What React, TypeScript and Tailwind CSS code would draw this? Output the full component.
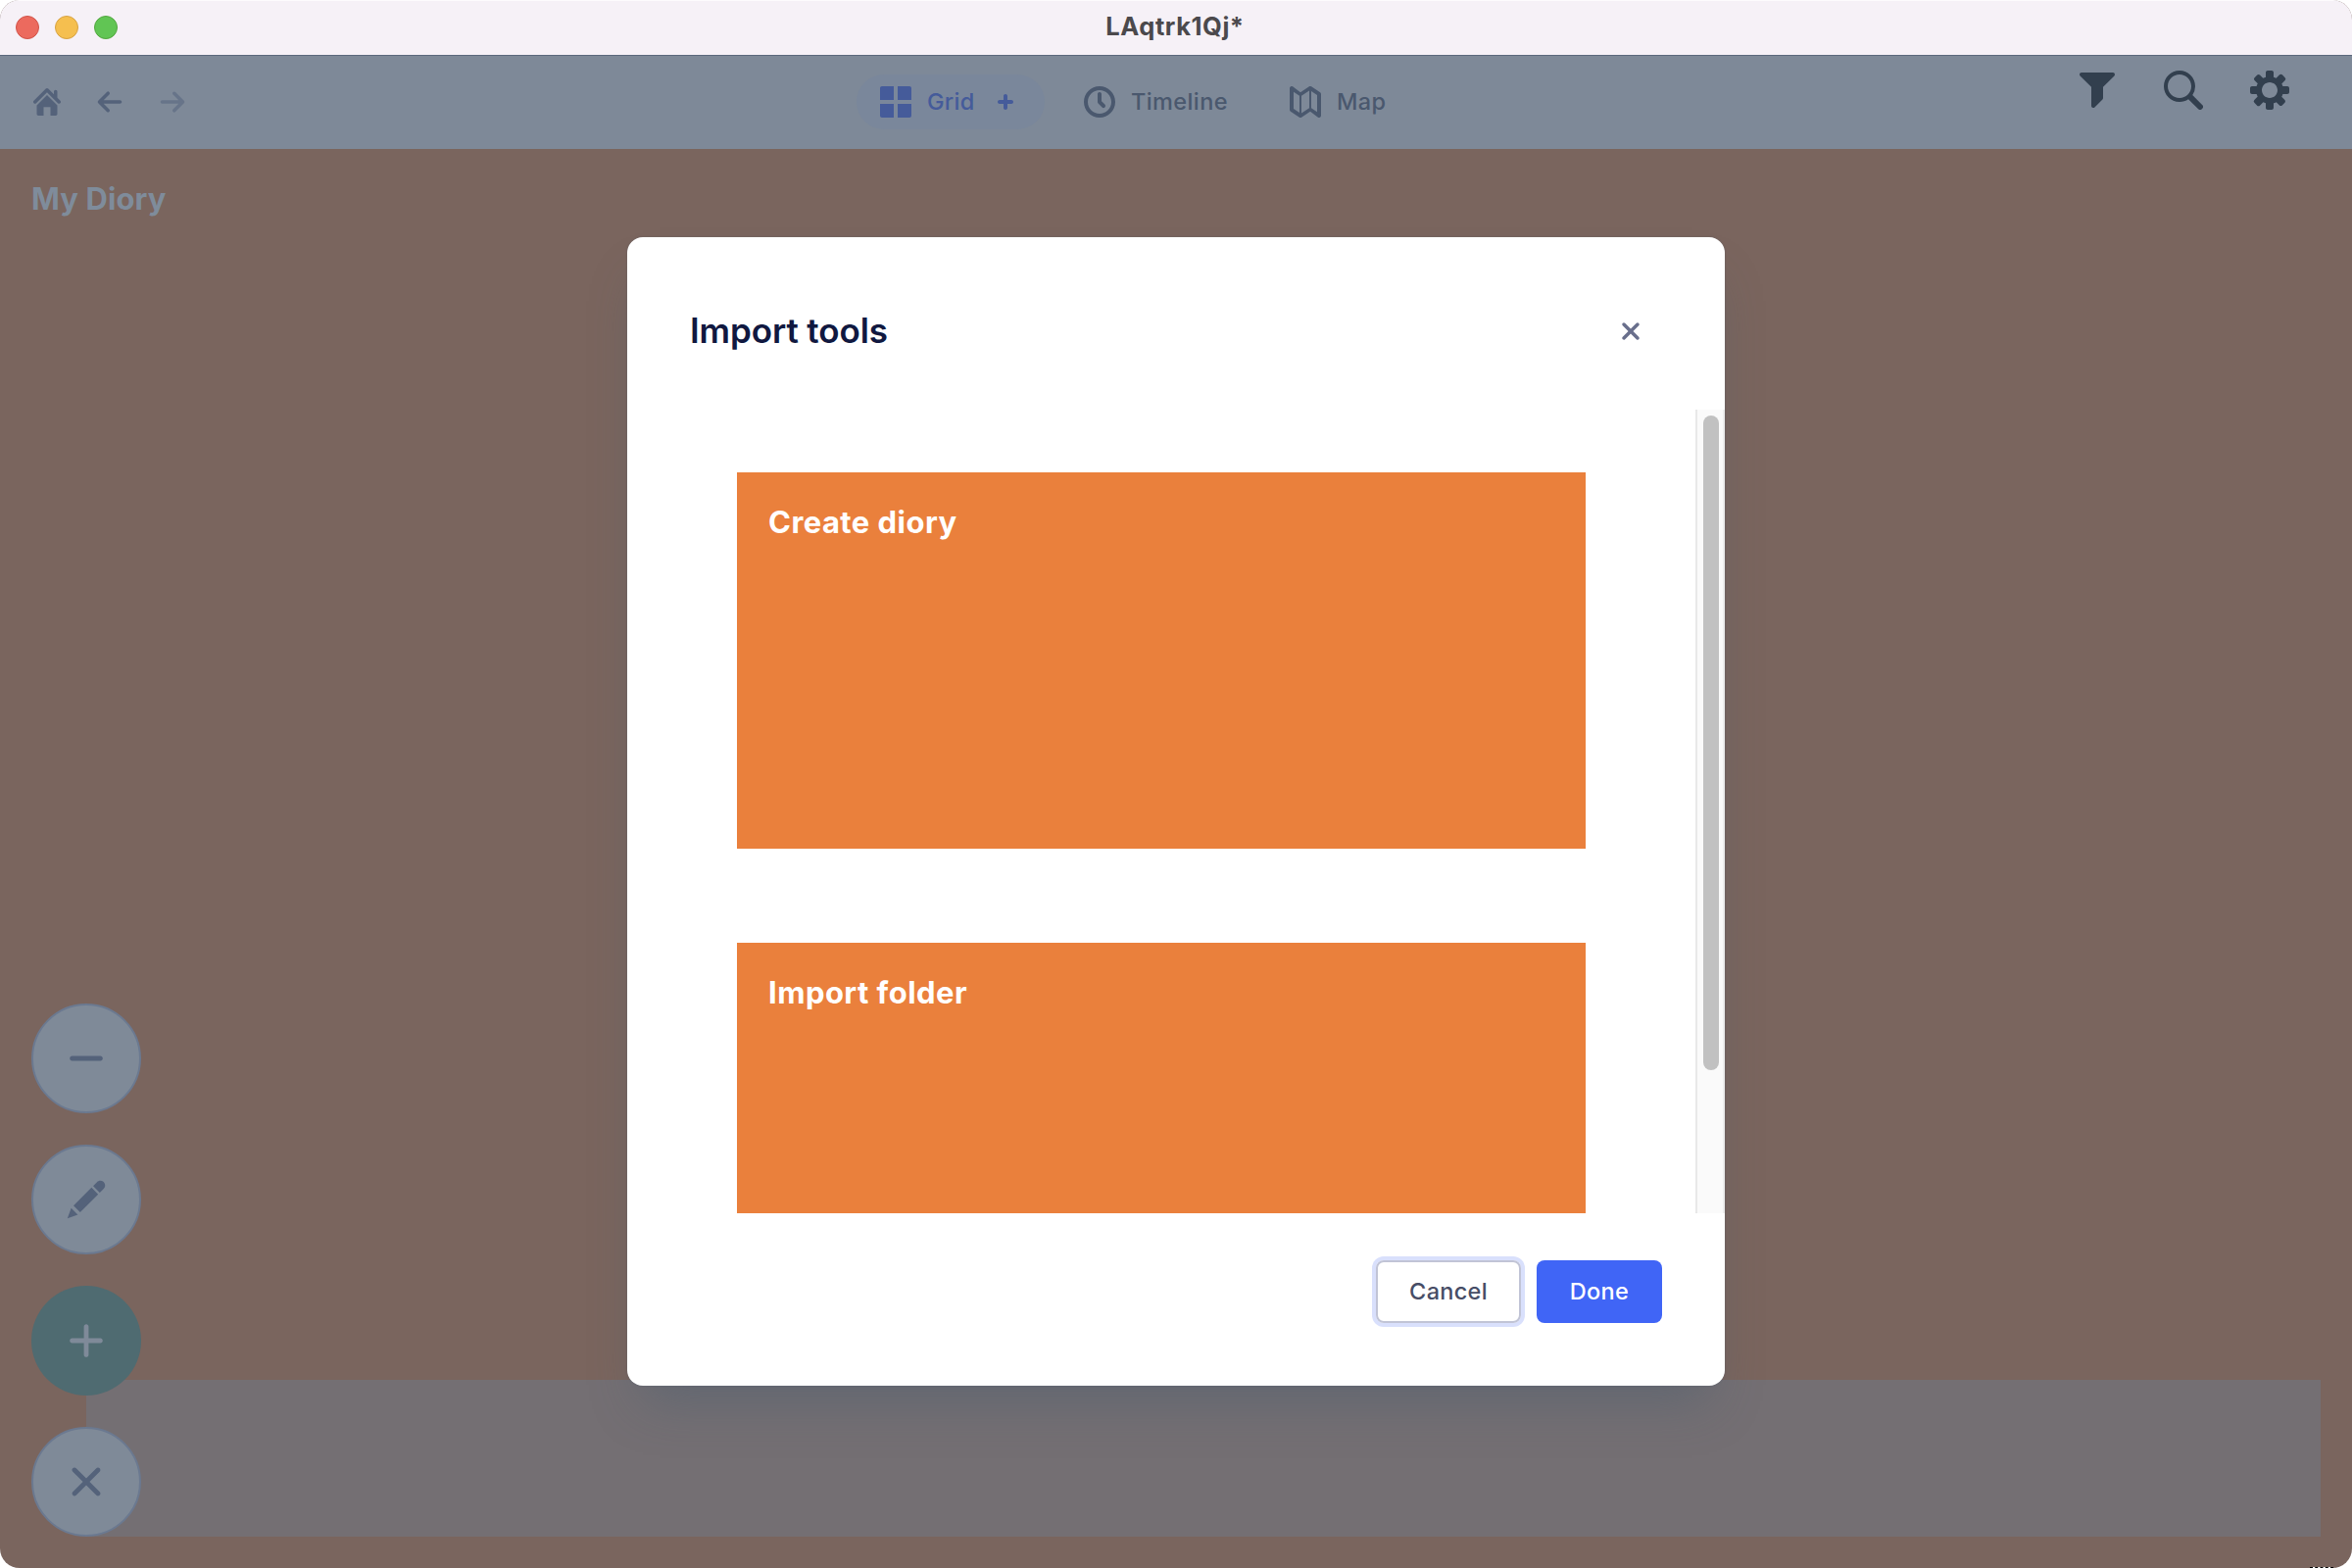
import type { ReactNode } from "react";

const ICONS = {
  home: "M2 10v5c0 .55.45 1 1 1h3v-5h4v5h3c.55 0 1-.45 1-1v-5L8 4l-6 6zm13.71-2.71L14 5.59V2c0-.55-.45-1-1-1s-1 .45-1 1v1.59L8.71.29C8.53.11 8.28 0 8 0s-.53.11-.71.29l-7 7a1.003 1.003 0 001.42 1.42L8 2.41l6.29 6.29c.18.19.43.3.71.3a1.003 1.003 0 00.71-1.71z",
  arrowLeft: "M13.99 6.99H4.41L7.7 3.7a1.003 1.003 0 00-1.42-1.42l-5 5a1.014 1.014 0 000 1.42l5 5a1.003 1.003 0 001.42-1.42L4.41 8.99H14c.55 0 1-.45 1-1s-.46-1-1.01-1z",
  grid: "M0 1v6h7V0H1C.45 0 0 .45 0 1zm0 14c0 .55.45 1 1 1h6V9H0v6zM15 0H9v7h7V1c0-.55-.45-1-1-1zM9 16h6c.55 0 1-.45 1-1V9H9v7z",
  smallPlus: "M11 7H9V5c0-.55-.45-1-1-1s-1 .45-1 1v2H5c-.55 0-1 .45-1 1s.45 1 1 1h2v2c0 .55.45 1 1 1s1-.45 1-1V9h2c.55 0 1-.45 1-1s-.45-1-1-1z",
  time: "M8 0C3.58 0 0 3.58 0 8s3.58 8 8 8 8-3.58 8-8-3.58-8-8-8zm0 14c-3.31 0-6-2.69-6-6s2.69-6 6-6 6 2.69 6 6-2.69 6-6 6zm1-6.41V4c0-.55-.45-1-1-1s-1 .45-1 1v4c0 .28.11.53.29.71l2 2a1.003 1.003 0 001.42-1.42L9 7.59z",
  map: "M15.55 3.17l-4.49-3A.998.998 0 0010.5 0c-.2 0-.39.06-.55.17L5.5 3.13 1.55.17A1 1 0 000 1v11c0 .35.18.65.45.83l4.5 3c.15.11.34.17.55.17s.4-.06.55-.17l4.45-2.96 3.95 2.96A1 1 0 0016 15V4c0-.35-.18-.65-.45-.83zM5 13.46l-3-2V2.87l3 2v8.59zm5-2.33l-4 2.66V4.87l4-2.67v8.93zm4 2L11 11.13V2.54l3 2v8.59z",
  cross16: "M9.41 8l3.29-3.29c.19-.18.3-.43.3-.71a1.003 1.003 0 00-1.71-.71L8 6.59l-3.29-3.3a1.003 1.003 0 00-1.42 1.42L6.59 8 3.3 11.29c-.19.18-.3.43-.3.71a1.003 1.003 0 001.71.71L8 9.41l3.29 3.29c.18.19.43.3.71.3a1.003 1.003 0 00.71-1.71L9.41 8z",
  filter: "M18 1H2c-.55 0-1 .45-1 1 0 .28.11.53.29.71L7 8.41V18a1.003 1.003 0 001.71.71l4-4c.18-.18.29-.43.29-.71V8.41l5.71-5.71c.18-.17.29-.42.29-.7 0-.55-.45-1-1-1z",
  search: "M19.56 17.44l-4.94-4.94A8.004 8.004 0 0016 8c0-4.42-3.58-8-8-8S0 3.58 0 8s3.58 8 8 8c1.67 0 3.21-.51 4.5-1.38l4.94 4.94a1.498 1.498 0 102.12-2.12zM8 14c-3.31 0-6-2.69-6-6s2.69-6 6-6 6 2.69 6 6-2.69 6-6 6z",
  cog: "M19 8h-2.31c-.14-.46-.33-.89-.56-1.3l1.7-1.7a.996.996 0 000-1.41l-1.41-1.41a.996.996 0 00-1.41 0l-1.7 1.7c-.41-.22-.84-.41-1.3-.55V1c0-.55-.45-1-1-1H9c-.55 0-1 .45-1 1v2.33c-.48.14-.94.34-1.37.58L5 2.28a.972.972 0 00-1.36 0L2.28 3.64c-.37.38-.37.99 0 1.36L3.9 6.62c-.24.44-.44.89-.59 1.38H1c-.55 0-1 .45-1 1v2c0 .55.45 1 1 1h2.31c.14.46.33.89.56 1.3L2.17 15a.996.996 0 000 1.41l1.41 1.41c.39.39 1.02.39 1.41 0l1.7-1.7c.41.22.84.41 1.3.55V19c0 .55.45 1 1 1h2c.55 0 1-.45 1-1v-2.33c.48-.14.94-.35 1.37-.59L15 17.72c.37.38.98.38 1.36 0l1.36-1.36c.37-.38.37-.99 0-1.36l-1.62-1.62c.24-.43.45-.89.6-1.38H19c.55 0 1-.45 1-1V9c0-.55-.45-1-1-1zm-9 6c-2.21 0-4-1.79-4-4s1.79-4 4-4 4 1.79 4 4-1.79 4-4 4z",
  minus: "M16 9H4c-.55 0-1 .45-1 1s.45 1 1 1h12c.55 0 1-.45 1-1s-.45-1-1-1z",
  edit: "M4.59 12.59l2.83 2.83 7.65-7.65-2.83-2.83-7.65 7.65zM2 18l4.41-1.59-2.81-2.79L2 18zM16 2c-.55 0-1.05.22-1.41.59l-1.65 1.65 2.83 2.83 1.65-1.65A2.006 2.006 0 0016 2z",
  plus: "M16 9h-5V4c0-.55-.45-1-1-1s-1 .45-1 1v5H4c-.55 0-1 .45-1 1s.45 1 1 1h5v5c0 .55.45 1 1 1s1-.45 1-1v-5h5c.55 0 1-.45 1-1s-.45-1-1-1z",
  cross: "M11.41 10l4.29-4.29c.19-.18.3-.43.3-.71a1.003 1.003 0 00-1.71-.71L10 8.59l-4.29-4.3a1.003 1.003 0 00-1.42 1.42L8.59 10 4.3 14.29c-.19.18-.3.43-.3.71a1.003 1.003 0 001.71.71l4.29-4.3 4.29 4.29c.18.19.43.3.71.3a1.003 1.003 0 00.71-1.71L11.41 10z",
};

function Icon({ name, grid = 16, className }: { name: keyof typeof ICONS; grid?: 16 | 20; className: string }) {
  return (
    <svg viewBox={`0 0 ${grid} ${grid}`} fill="currentColor" fillRule="evenodd" className={`shrink-0 ${className}`}>
      <path d={ICONS[name]} />
    </svg>
  );
}

function TitleBar() {
  return (
    <div className="grid h-14 shrink-0 grid-cols-3 items-center border-t border-[#fdfbfd] bg-[#f6f1f7] px-4 pb-px">
      <div className="flex gap-4">
        <span className="size-6 rounded-full border border-[#d05349] bg-[#ec6a5e]" />
        <span className="size-6 rounded-full border border-[#d6a243] bg-[#f5bf4f]" />
        <span className="size-6 rounded-full border border-[#52a63f] bg-[#61c554]" />
      </div>
      <div className="pr-[2px] pb-[3px] text-center text-[25.5px] leading-8 font-bold tracking-[0.55px] text-[#4b494c]">LAqtrk1Qj*</div>
    </div>
  );
}

function NavBar() {
  return (
    <div className="flex h-24 shrink-0 justify-between border-t border-[#5b697c] bg-[#7e8998]">
      <div className="flex w-[874px] items-center gap-9 pb-px pl-[34px] text-[#54627a]">
        <Icon name="home" className="size-7" />
        <Icon name="arrowLeft" className="size-7" />
        <Icon name="arrowLeft" className="size-7 rotate-180 text-[#677489]" />
      </div>
      <div className="flex flex-1 items-center pb-px text-[23.5px] leading-8 font-medium tracking-[0.3px] text-[#4a586e]">
        <div className="flex h-14 w-48 items-center rounded-full bg-[#7a879b] pl-6 text-[#455b9a]">
          <Icon name="grid" className="size-8" />
          <span className="ml-4 w-14">Grid</span>
          <Icon name="smallPlus" className="ml-2 size-8" />
        </div>
        <div className="ml-10 flex w-[210px] items-center gap-4">
          <Icon name="time" className="size-8" />
          <span className="tracking-[0.4px]">Timeline</span>
        </div>
        <div className="flex items-center gap-4">
          <Icon name="map" className="size-8" />
          <span>Map</span>
        </div>
      </div>
      <div className="flex gap-12 pt-[15px] pr-16 text-[#323f4e]">
        <Icon name="filter" grid={20} className="size-10" />
        <Icon name="search" grid={20} className="size-10" />
        <Icon name="cog" grid={20} className="size-10" />
      </div>
    </div>
  );
}

function RoundButton({ name, primary = false }: { name: keyof typeof ICONS; primary?: boolean }) {
  return (
    <button
      className={
        primary
          ? "flex size-28 items-center justify-center rounded-full bg-[#4f6b71] text-[#7f8a99]"
          : "flex size-28 items-center justify-center rounded-full border-2 border-[#6b7990] bg-[#7f8a98] text-[#54627a]"
      }
    >
      <Icon name={name} grid={20} className="size-12" />
    </button>
  );
}

function Card({ children }: { children: ReactNode }) {
  return (
    <div className="h-96 w-[866px] shrink-0 bg-[#ea803c] px-8 pt-8 text-[31px] leading-[38px] font-bold tracking-[0.45px] text-white">
      {children}
    </div>
  );
}

function ImportDialog() {
  return (
    <div className="flex h-[1172px] w-[1120px] flex-col rounded-2xl bg-white shadow-[0_0_2px_rgba(67,90,111,0.3),0_32px_48px_-16px_rgba(67,90,111,0.4)]">
      <div className="flex h-44 shrink-0 items-center justify-between pt-4 pr-[82px] pl-16">
        <h2 className="pb-0.5 text-[35px] leading-12 font-semibold tracking-[-0.1px] text-[#101840]">Import tools</h2>
        <Icon name="cross16" className="size-7 text-[#696f8c]" />
      </div>
      <div className="flex h-[820px] shrink-0 justify-between overflow-hidden">
        <div className="flex flex-col gap-24 pt-16 pl-28">
          <Card>Create diory</Card>
          <Card>Import folder</Card>
        </div>
        <div className="h-full w-[30px] border-r-2 border-l-2 border-r-[#ededed] border-l-[#e8e8e8] bg-[#fafafa] pt-1.5 pl-1.5">
          <div className="h-[668px] w-4 rounded-full bg-[#c1c1c1]" />
        </div>
      </div>
      <div className="flex justify-end gap-4 pt-12 pr-16 text-[23.5px] font-medium tracking-[0.3px]">
        <button className="h-16 w-[148px] rounded-lg border-2 border-[#c1c4d6] text-[#474d66] ring-4 ring-[#d9e0fc]">Cancel</button>
        <button className="h-16 w-32 rounded-lg bg-[#4065f6] text-white">Done</button>
      </div>
    </div>
  );
}

export default function App() {
  return (
    <div className="relative h-[1600px] w-[2400px] bg-white font-['Inter',sans-serif]">
      <div className="flex h-full w-full flex-col overflow-hidden rounded-[20px] bg-[#7a655e]">
        <TitleBar />
        <NavBar />
        <div className="flex flex-1 flex-col justify-between p-8">
          <h1 className="text-[31px] leading-[38px] font-bold tracking-[0.1px] text-[#7f8c9b]">My Diory</h1>
          <div className="relative flex flex-col gap-8">
            <div className="absolute right-0 bottom-0 left-14 h-40 bg-[#746f73]" />
            <div className="relative flex w-28 flex-col gap-8">
              <RoundButton name="minus" />
              <RoundButton name="edit" />
              <RoundButton name="plus" primary />
              <RoundButton name="cross" />
            </div>
          </div>
        </div>
      </div>
      <div className="absolute right-[19px] bottom-0 h-px w-6 border-b border-dashed border-black bg-white" />
      <div className="absolute inset-x-0 top-[242px] flex justify-center">
        <ImportDialog />
      </div>
    </div>
  );
}
